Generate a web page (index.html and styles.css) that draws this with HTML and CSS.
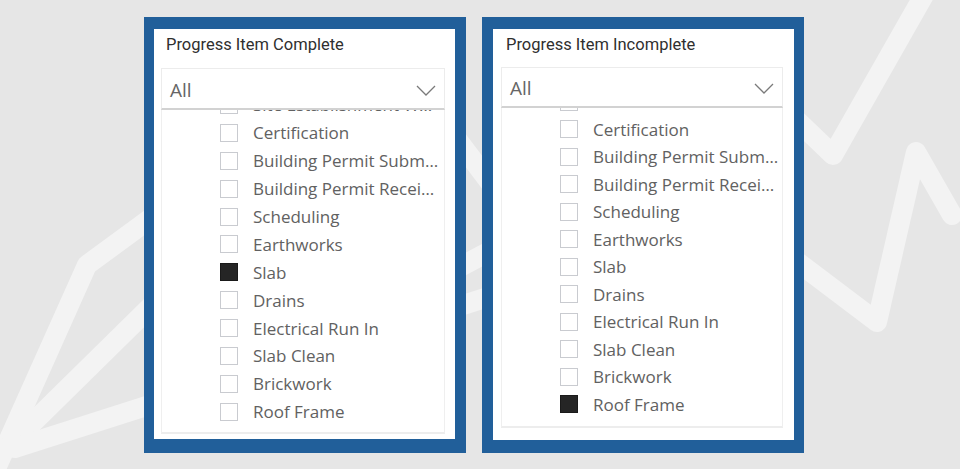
FILE: index.html
```html
<!DOCTYPE html>
<html lang="en">
<head>
<meta charset="utf-8">
<title>Progress Item Slicers</title>
<link rel="stylesheet" href="styles.css">
</head>
<body>
<div class="stage">
  <svg class="backdrop" width="960" height="469" viewBox="0 0 960 469" aria-hidden="true">
    <g fill="none" stroke="#f3f3f3" stroke-width="20" stroke-linecap="round" stroke-linejoin="round">
      <polyline points="-10,482 87,265 200,182"/>
      <polyline points="10,445 200,258"/>
      <polyline points="15,448 620,255"/>
      <polyline points="300,352 620,182"/>
      <polyline points="420,90 620,355"/>
      <polyline points="760,85 833,155 928,-12"/>
      <polyline points="750,226 877,322 916,152 952,215"/>
    </g>
  </svg>

  <div class="panels">
    <section class="slicer slicer-complete">
      <div class="card">
        <div class="title">Progress Item Complete</div>
        <div class="dropdown">
          <span class="value">All</span>
          <svg class="chevron" width="20" height="11" viewBox="0 0 20 11"><polyline points="1,1 10,10 19,1" fill="none" stroke="#7a7a7a" stroke-width="1.3"/></svg>
        </div>
        <div class="list">
          <ul class="items">
            <li class="item"><span class="box"></span><span class="label">Site Establishment Works</span></li>
            <li class="item"><span class="box"></span><span class="label">Certification</span></li>
            <li class="item"><span class="box"></span><span class="label">Building Permit Submitted</span></li>
            <li class="item"><span class="box"></span><span class="label">Building Permit Received</span></li>
            <li class="item"><span class="box"></span><span class="label">Scheduling</span></li>
            <li class="item"><span class="box"></span><span class="label">Earthworks</span></li>
            <li class="item"><span class="box checked"></span><span class="label">Slab</span></li>
            <li class="item"><span class="box"></span><span class="label">Drains</span></li>
            <li class="item"><span class="box"></span><span class="label">Electrical Run In</span></li>
            <li class="item"><span class="box"></span><span class="label">Slab Clean</span></li>
            <li class="item"><span class="box"></span><span class="label">Brickwork</span></li>
            <li class="item"><span class="box"></span><span class="label">Roof Frame</span></li>
          </ul>
        </div>
      </div>
    </section>

    <section class="slicer slicer-incomplete">
      <div class="card">
        <div class="title">Progress Item Incomplete</div>
        <div class="dropdown">
          <span class="value">All</span>
          <svg class="chevron" width="20" height="11" viewBox="0 0 20 11"><polyline points="1,1 10,10 19,1" fill="none" stroke="#7a7a7a" stroke-width="1.3"/></svg>
        </div>
        <div class="list">
          <ul class="items">
            <li class="item"><span class="box"></span><span class="label">Site Establishment Works</span></li>
            <li class="item"><span class="box"></span><span class="label">Certification</span></li>
            <li class="item"><span class="box"></span><span class="label">Building Permit Submitted</span></li>
            <li class="item"><span class="box"></span><span class="label">Building Permit Received</span></li>
            <li class="item"><span class="box"></span><span class="label">Scheduling</span></li>
            <li class="item"><span class="box"></span><span class="label">Earthworks</span></li>
            <li class="item"><span class="box"></span><span class="label">Slab</span></li>
            <li class="item"><span class="box"></span><span class="label">Drains</span></li>
            <li class="item"><span class="box"></span><span class="label">Electrical Run In</span></li>
            <li class="item"><span class="box"></span><span class="label">Slab Clean</span></li>
            <li class="item"><span class="box"></span><span class="label">Brickwork</span></li>
            <li class="item"><span class="box checked"></span><span class="label">Roof Frame</span></li>
          </ul>
        </div>
      </div>
    </section>
  </div>
</div>
</body>
</html>
```

FILE: styles.css
```css
* { box-sizing: border-box; }

html, body {
  margin: 0;
  padding: 0;
  background: #e6e6e6;
}

.stage {
  position: relative;
  width: 960px;
  height: 469px;
  overflow: hidden;
  background: #e6e6e6;
  font-family: "Open Sans", "Noto Sans", "Liberation Sans", sans-serif;
}

.backdrop {
  position: absolute;
  left: 0;
  top: 0;
  z-index: 0;
}

.panels {
  position: relative;
  z-index: 1;
  display: flex;
  gap: 16px;
  padding: 17px 0 0 144px;
}

.slicer {
  width: 322px;
  height: 436px;
  background: #215f9a;
}

.slicer-complete { padding: 12px 11px 14px 10px; }
.slicer-incomplete { padding: 12px 10px 13px 11px; }

.card {
  height: 100%;
  background: #ffffff;
  display: flex;
  flex-direction: column;
}

.title {
  font-family: "Roboto", "Liberation Sans", sans-serif;
  font-size: 16.5px;
  line-height: 20px;
  color: #2f2f2f;
  margin-top: 6px;
}

.slicer-complete .title { padding-left: 12px; }
.slicer-incomplete .title { padding-left: 13px; }

.dropdown {
  display: flex;
  align-items: center;
  justify-content: space-between;
  border: 1px solid #ececec;
  border-bottom: 2px solid #d2d2d2;
  padding: 2px 8px 0 8px;
}

.slicer-complete .dropdown { margin: 13px 10px 0 7px; height: 42px; }
.slicer-incomplete .dropdown { margin: 12px 11px 0 8px; height: 41px; }

.value {
  font-size: 19px;
  color: #666666;
  line-height: 24px;
}

.chevron { display: block; margin-top: 1px; }

.list {
  overflow: hidden;
  border: 1px solid #efefef;
  border-top: none;
  border-bottom: 2px solid #ededed;
}

.slicer-complete .list { margin: 0 10px 0 7px; height: 324px; }
.slicer-incomplete .list { margin: 0 11px 0 8px; height: 320px; }

.items {
  list-style: none;
  margin: 0;
  padding: 0;
}

.slicer-complete .items { margin-top: -19px; }
.slicer-incomplete .items { margin-top: -20px; }

.item {
  display: flex;
  align-items: center;
  padding-left: 58px;
  padding-right: 2px;
}

.slicer-complete .item { height: 27.9px; }
.slicer-incomplete .item { height: 27.5px; }

.box {
  flex: none;
  width: 18px;
  height: 18px;
  border: 1px solid #c9cbd0;
  background: #ffffff;
}

.box.checked {
  background: #252525;
  border-color: #1a1a1a;
}

.label {
  margin-left: 15px;
  font-size: 17px;
  color: #616161;
  white-space: nowrap;
  overflow: hidden;
  text-overflow: ellipsis;
}
```
